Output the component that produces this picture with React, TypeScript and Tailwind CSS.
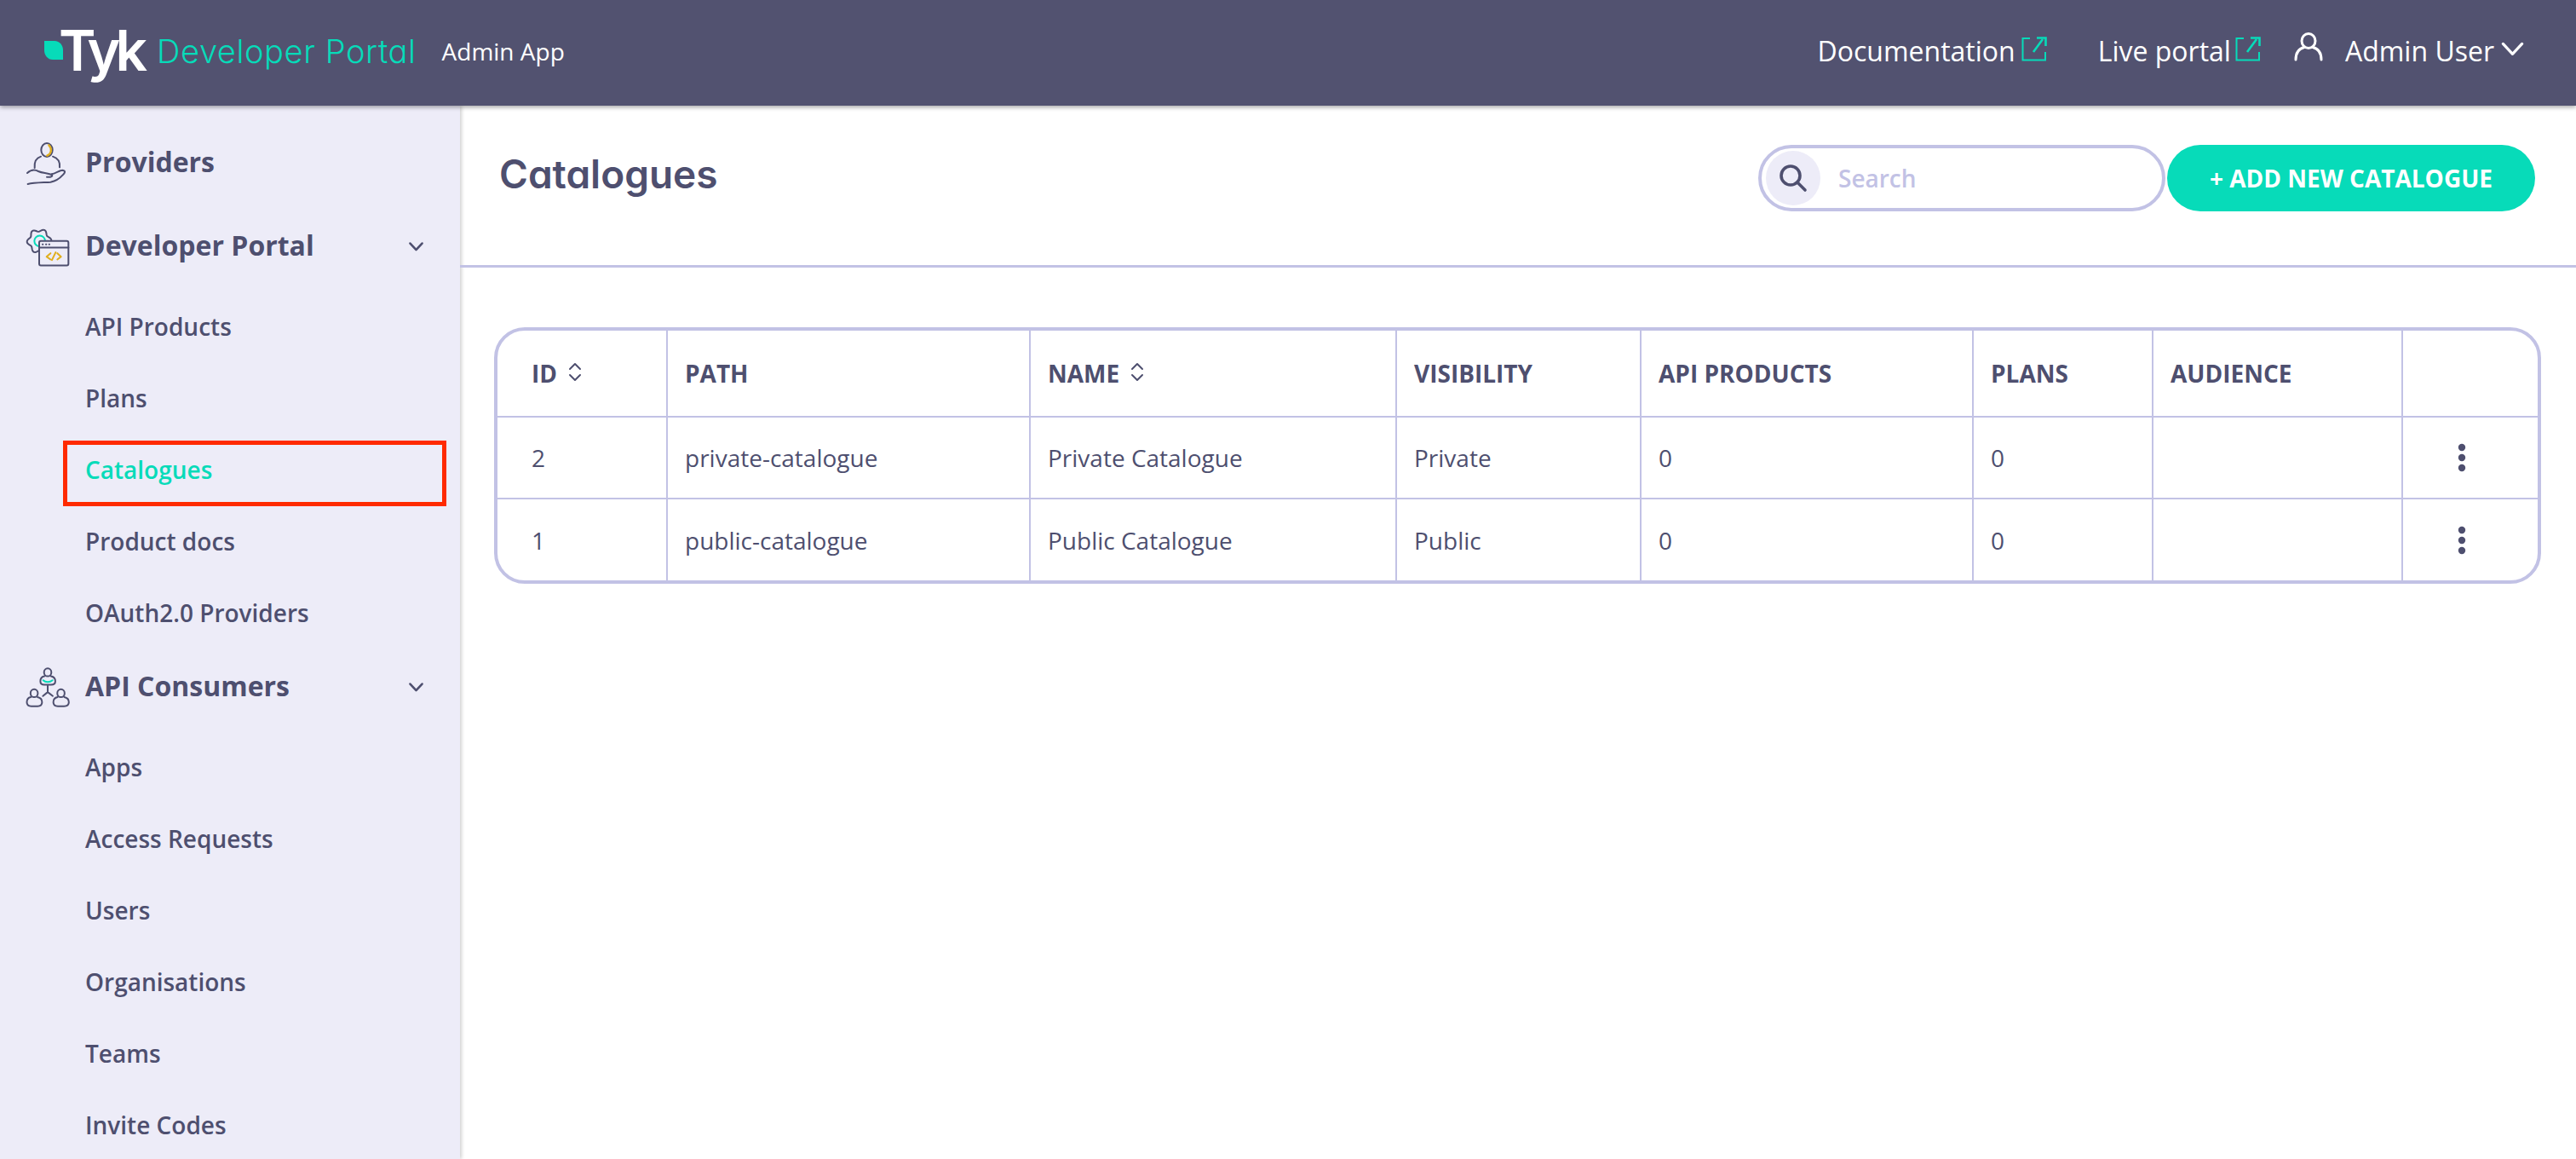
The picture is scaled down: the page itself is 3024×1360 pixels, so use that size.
const GEAR_POINTS = Array.from({ length: 72 }, (_, i) => {
  const a = (i / 72) * Math.PI * 2
  const r = 38 + 5 * Math.cos(a * 6 + 0.4)
  return `${(78 + r * Math.cos(a)).toFixed(1)},${(95 + r * Math.sin(a)).toFixed(1)}`
}).join(' ')

const ROWS = [
  { id: '2', path: 'private-catalogue', name: 'Private Catalogue', visibility: 'Private' },
  { id: '1', path: 'public-catalogue', name: 'Public Catalogue', visibility: 'Public' },
]

const NAVY = '#4e4f6f'

function ProvidersIcon() {
  return (
    <svg width="48" height="51" viewBox="30 45 144 153" fill="none" stroke={NAVY} strokeWidth="6" strokeLinecap="round" strokeLinejoin="round">
      <ellipse cx="105" cy="75" rx="20" ry="24" />
      <path d="M112 58 C124 70 122 88 106 95" stroke="#e0ae1c" strokeWidth="7" />
      <path d="M84 98 C68 103 60 115 62 138" />
      <path d="M126 98 C142 103 152 115 150 136" />
      <path d="M36 156 C45 148 60 142 75 150 C90 157 105 155 122 162 C128 166 120 172 105 170" />
      <path d="M122 160 C135 158 150 146 160 146 C172 148 170 156 160 164 C148 178 138 184 118 188 C90 190 60 190 38 195" />
    </svg>
  )
}

function DevPortalIcon() {
  return (
    <svg width="52" height="47" viewBox="30 45 156 140" fill="none" stroke={NAVY} strokeWidth="6" strokeLinecap="round" strokeLinejoin="round">
      <polygon points={GEAR_POINTS} />
      <circle cx="80" cy="95" r="19" stroke="#07dbb9" />
      <rect x="78" y="95" width="103" height="86" rx="6" fill="#edecf8" />
      <path d="M78 118 H181" />
      <path d="M90 107 H91 M102 107 H103 M113 107 H114" />
      <path d="M118 138 L104 150 L118 160 M136 135 L123 162 M142 138 L155 150 L142 160" stroke="#e0ae1c" />
    </svg>
  )
}

function ConsumersIcon() {
  return (
    <svg width="52" height="47" viewBox="30 40 156 142" fill="none" stroke={NAVY} strokeWidth="6" strokeLinecap="round" strokeLinejoin="round">
      <ellipse cx="108" cy="58" rx="13" ry="14" />
      <path d="M96 72 C86 74 82 80 82 90 C82 98 88 102 96 102 H120 C130 102 135 98 135 90 C135 80 130 74 120 72" />
      <path d="M92 86 C100 94 116 94 125 86" stroke="#07dbb9" />
      <path d="M108 106 V128 M108 128 L91 142 M108 128 L126 142" />
      <ellipse cx="60" cy="132" rx="13" ry="14" />
      <path d="M48 146 C38 148 34 156 34 164 C34 174 42 178 50 178 H72 C82 178 88 174 88 164 C88 156 82 148 72 146" />
      <ellipse cx="155" cy="132" rx="13" ry="14" />
      <path d="M143 146 C133 148 128 156 128 164 C128 174 136 178 144 178 H166 C176 178 183 174 183 164 C183 156 177 148 167 146" />
    </svg>
  )
}

function ChevronDown({ width = 17, stroke = NAVY, strokeWidth = 2.6 }: { width?: number; stroke?: string; strokeWidth?: number }) {
  return (
    <svg width={width} height={width * 0.62} viewBox="0 0 17 10.5" fill="none" stroke={stroke} strokeWidth={strokeWidth} strokeLinecap="round" strokeLinejoin="round">
      <path d="M1.5 1.5 L8.5 9 L15.5 1.5" />
    </svg>
  )
}

function ExternalIcon() {
  return (
    <svg width="30" height="29" viewBox="0 0 30 29" fill="none" stroke="#07dbb9" strokeWidth="2">
      <path d="M10 2 H1.5 V27.5 H28 V18" />
      <path d="M14 18 L25 3" strokeWidth="2.6" />
      <path d="M18 1.5 H28.5 V11" strokeWidth="2.6" />
    </svg>
  )
}

function SortIcon() {
  return (
    <svg width="18" height="23" viewBox="0 0 18 23" fill="none" stroke={NAVY} strokeWidth="2" strokeLinecap="round" strokeLinejoin="round" className="ml-3 -mt-1">
      <path d="M3 8 L9 2 L15 8 M3 15 L9 21 L15 15" />
    </svg>
  )
}

function Group({ icon, label, open }: { icon: React.ReactNode; label: string; open?: boolean }) {
  return (
    <div className="relative flex h-[88px] items-center pl-[30px]">
      <div className="flex w-[70px] items-center">{icon}</div>
      <span className="pb-[2px] text-[32px] font-bold text-[#4e4f6f]">{label}</span>
      {open && (
        <div className="absolute left-[480px] top-[39px] flex">
          <ChevronDown />
        </div>
      )}
    </div>
  )
}

function SubItem({ label, active }: { label: string; active?: boolean }) {
  return (
    <div className={`relative flex h-[84px] items-center pb-[2px] pl-[100px] text-[28px] font-semibold ${active ? 'text-[#07dbb9]' : 'text-[#4e4f6f]'}`}>
      {label}
      {active && <span className="absolute left-[74px] top-[7px] h-[77px] w-[450px] border-[5px] border-[#ff2a00]" />}
    </div>
  )
}

function Sidebar() {
  return (
    <aside className="w-[540px] shrink-0 overflow-hidden bg-[#edecf8] pt-[23px] shadow-[2px_0_4px_rgba(0,0,0,0.18)]">
      <div className="mb-[10px]">
        <Group icon={<ProvidersIcon />} label="Providers" />
      </div>
      <div className="mb-[9px]">
        <Group icon={<DevPortalIcon />} label="Developer Portal" open />
      </div>
      <SubItem label="API Products" />
      <SubItem label="Plans" />
      <SubItem label="Catalogues" active />
      <SubItem label="Product docs" />
      <SubItem label="OAuth2.0 Providers" />
      <div className="mb-[9px]">
        <Group icon={<ConsumersIcon />} label="API Consumers" open />
      </div>
      <SubItem label="Apps" />
      <SubItem label="Access Requests" />
      <SubItem label="Users" />
      <SubItem label="Organisations" />
      <SubItem label="Teams" />
      <SubItem label="Invite Codes" />
    </aside>
  )
}

function Topbar() {
  return (
    <header className="relative z-10 flex h-[124px] shrink-0 items-center bg-[#525270] pb-[4px] text-white shadow-[0_2px_5px_rgba(0,0,0,0.35)]">
      {/* logo */}
      <div className="flex items-center pl-[52px]">
        <svg width="22" height="22" viewBox="0 0 22 22" className="-mt-[2px]">
          <path d="M0 0 H12 C18 0 22 5 22 11 V22 H10 C4 22 0 17 0 11 Z" fill="#07dbb9" />
        </svg>
        <span className="-ml-[5px] -mt-[2px] font-['Inter',sans-serif] text-[66px] font-semibold leading-none tracking-[-6px]">Tyk</span>
      </div>
      <span className="ml-[17px] font-['Inter',sans-serif] text-[38px] font-light tracking-[0.6px] text-[#07dbb9] [font-feature-settings:'cv11']">Developer Portal</span>
      <span className="ml-[30px] text-[28px]">Admin App</span>

      <div className="ml-auto flex items-center pr-[61px] text-[32px]">
        <span>Documentation</span>
        <span className="ml-[7px] -mt-[6px] flex"><ExternalIcon /></span>
        <span className="ml-[60px]">Live portal</span>
        <span className="ml-[5px] -mt-[6px] flex"><ExternalIcon /></span>
        <svg width="34" height="34" viewBox="0 0 34 34" fill="none" stroke="white" strokeWidth="3" strokeLinecap="round" className="ml-[39px] -mt-[11px]">
          <ellipse cx="17" cy="10" rx="8" ry="8.5" />
          <path d="M2 32 C2 24 6 19 12 17.5 M32 32 C32 24 28 19 22 17.5" />
        </svg>
        <span className="ml-[26px]">Admin User</span>
        <span className="ml-[8px] -mt-[6px] flex"><ChevronDown width={27} stroke="white" strokeWidth={2} /></span>
      </div>
    </header>
  )
}

function CatalogueTable() {
  const th = 'border-l-2 border-[#c2c2e5] pl-5 text-left text-[28px] font-bold uppercase text-[#4e4f6f]'
  const td = 'border-l-2 border-t-2 border-[#c2c2e5] pl-5 text-[28px] font-normal text-[#4e4f6f]'
  return (
    <div className="overflow-hidden rounded-[36px] border-4 border-[#c2c2e5]">
      <table className="w-full table-fixed border-separate border-spacing-0">
        <colgroup>
          <col className="w-[198px]" />
          <col className="w-[426px]" />
          <col className="w-[430px]" />
          <col className="w-[287px]" />
          <col className="w-[390px]" />
          <col className="w-[211px]" />
          <col className="w-[293px]" />
          <col className="w-[160px]" />
        </colgroup>
        <thead>
          <tr className="h-[100px]">
            <th className="pl-10 text-left text-[28px] font-bold text-[#4e4f6f]">
              <span className="flex items-center">ID <SortIcon /></span>
            </th>
            <th className={th}>Path</th>
            <th className={th}>
              <span className="flex items-center">Name <SortIcon /></span>
            </th>
            <th className={th}>Visibility</th>
            <th className={th}>API Products</th>
            <th className={th}>Plans</th>
            <th className={th}>Audience</th>
            <th className={th} />
          </tr>
        </thead>
        <tbody>
          {ROWS.map(row => (
            <tr key={row.id} className="h-[96px] last:h-[97px]">
              <td className="border-t-2 border-[#c2c2e5] pl-10 text-[28px] text-[#4e4f6f]">{row.id}</td>
              <td className={td}>{row.path}</td>
              <td className={td}>{row.name}</td>
              <td className={td}>{row.visibility}</td>
              <td className={td}>0</td>
              <td className={td}>0</td>
              <td className={td} />
              <td className="border-l-2 border-t-2 border-[#c2c2e5] pr-[20px] text-center">
                <svg width="10" height="34" viewBox="0 0 10 34" fill={NAVY} className="mx-auto">
                  <circle cx="5" cy="5" r="4.2" />
                  <circle cx="5" cy="17" r="4.2" />
                  <circle cx="5" cy="29" r="4.2" />
                </svg>
              </td>
            </tr>
          ))}
        </tbody>
      </table>
    </div>
  )
}

export default function App() {
  return (
    <div className="flex h-[1360px] w-[3024px] flex-col overflow-hidden bg-white font-['Open_Sans',sans-serif]">
      <Topbar />
      <div className="flex min-h-0 flex-1">
        <Sidebar />
        <main className="min-w-0 flex-1">
          <div className="flex h-[190px] items-start justify-between border-b-[3px] border-[#c2c2e5] pl-[46px] pr-[48px] pt-[46px]">
            <h1 className="font-['Inter',sans-serif] text-[46px] font-semibold text-[#4e4f6f] [font-feature-settings:'cv11']">Catalogues</h1>
            <div className="flex items-center gap-[2px]">
              <div className="flex h-[78px] w-[478px] items-center rounded-full border-4 border-[#c2c2e5] pl-[5px]">
                <span className="flex h-[64px] w-[64px] items-center justify-center rounded-full bg-[#edecf8]">
                  <svg width="34" height="34" viewBox="0 0 34 34" fill="none" stroke={NAVY} strokeWidth="3.6" strokeLinecap="round">
                    <circle cx="14" cy="14" r="11" />
                    <path d="M22 22 L31 31" />
                  </svg>
                </span>
                <span className="ml-[21px] text-[28px] font-semibold text-[#c2c2e5]">Search</span>
              </div>
              <button className="h-[78px] w-[432px] rounded-full bg-[#07dbb9] text-[28px] font-bold uppercase text-white">+ Add new catalogue</button>
            </div>
          </div>
          <div className="pl-[40px] pr-[41px] pt-[70px]">
            <CatalogueTable />
          </div>
        </main>
      </div>
    </div>
  )
}
